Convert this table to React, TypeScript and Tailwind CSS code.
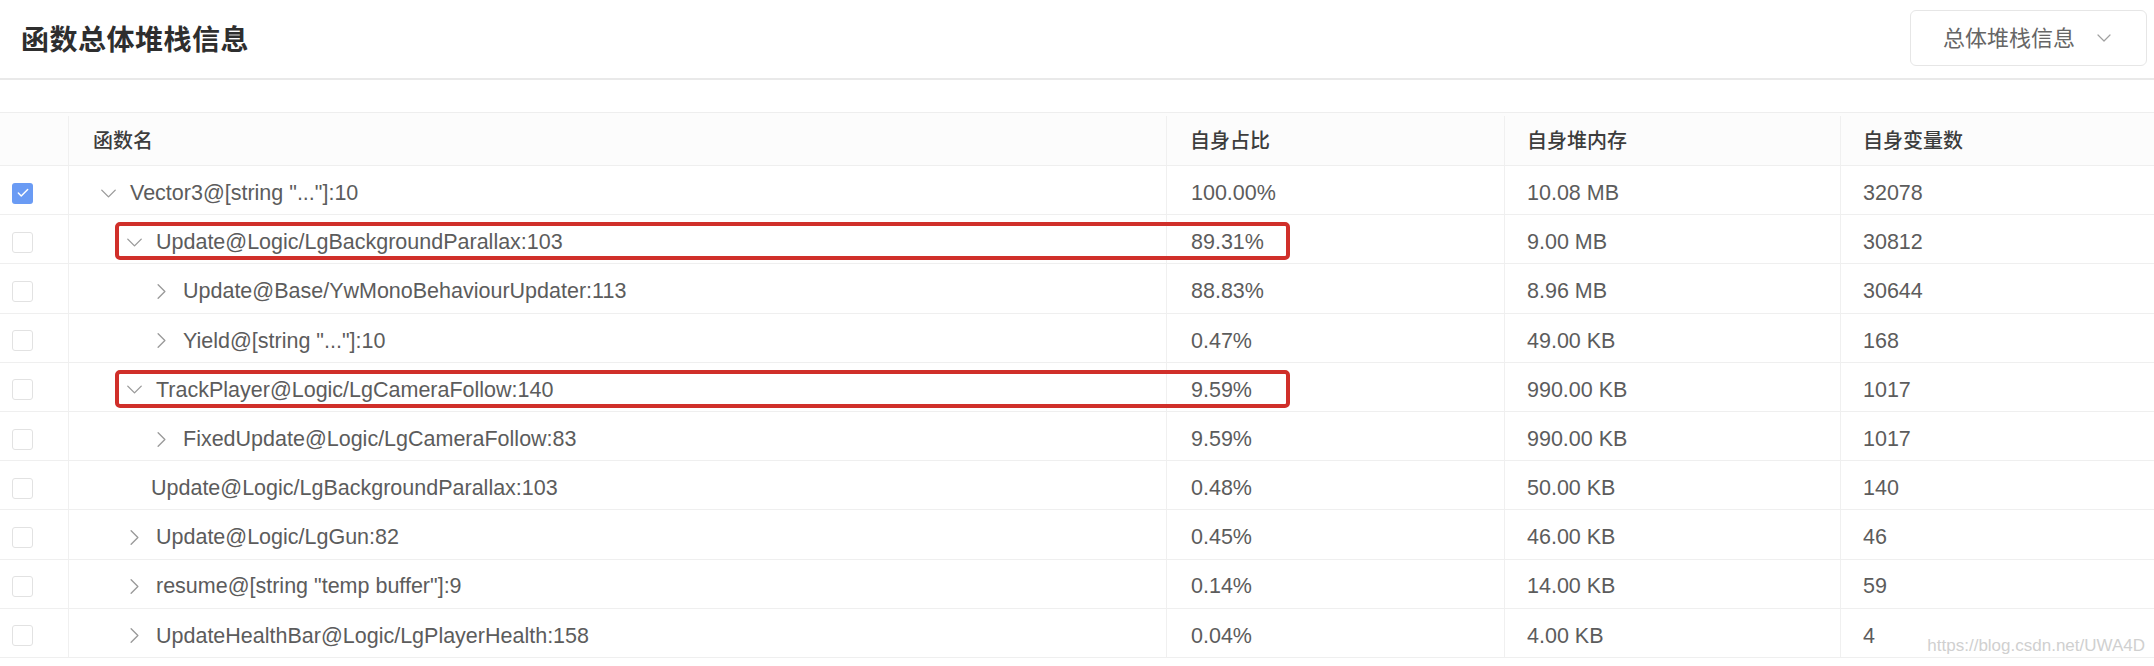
import { ChevronDown, ChevronRight, Check } from 'lucide-react';

type Row = {
  name: string;
  level: number;
  state: 'open' | 'closed' | 'leaf';
  ratio: string;
  heap: string;
  vars: string;
  checked?: boolean;
  marked?: boolean;
};

const rows: Row[] = [
  { name: 'Vector3@[string "..."]:10', level: 0, state: 'open', ratio: '100.00%', heap: '10.08 MB', vars: '32078', checked: true },
  { name: 'Update@Logic/LgBackgroundParallax:103', level: 1, state: 'open', ratio: '89.31%', heap: '9.00 MB', vars: '30812', marked: true },
  { name: 'Update@Base/YwMonoBehaviourUpdater:113', level: 2, state: 'closed', ratio: '88.83%', heap: '8.96 MB', vars: '30644' },
  { name: 'Yield@[string "..."]:10', level: 2, state: 'closed', ratio: '0.47%', heap: '49.00 KB', vars: '168' },
  { name: 'TrackPlayer@Logic/LgCameraFollow:140', level: 1, state: 'open', ratio: '9.59%', heap: '990.00 KB', vars: '1017', marked: true },
  { name: 'FixedUpdate@Logic/LgCameraFollow:83', level: 2, state: 'closed', ratio: '9.59%', heap: '990.00 KB', vars: '1017' },
  { name: 'Update@Logic/LgBackgroundParallax:103', level: 1, state: 'leaf', ratio: '0.48%', heap: '50.00 KB', vars: '140' },
  { name: 'Update@Logic/LgGun:82', level: 1, state: 'closed', ratio: '0.45%', heap: '46.00 KB', vars: '46' },
  { name: 'resume@[string "temp buffer"]:9', level: 1, state: 'closed', ratio: '0.14%', heap: '14.00 KB', vars: '59' },
  { name: 'UpdateHealthBar@Logic/LgPlayerHealth:158', level: 1, state: 'closed', ratio: '0.04%', heap: '4.00 KB', vars: '4' },
];

// tree indent per level
const indent = ['pl-[26px]', 'pl-[52px]', 'pl-[79px]'];
const cols = 'grid grid-cols-[69px_1098px_338px_336px_1fr]';

function Box({ checked }: { checked?: boolean }) {
  return checked ? (
    <span className="flex h-[21px] w-[21px] items-center justify-center rounded-[3px] bg-[#6a9bf4]">
      <Check className="h-[14px] w-[14px] text-white" strokeWidth={2.5} />
    </span>
  ) : (
    <span className="h-[21px] w-[21px] rounded-[3px] border border-[#e2e2e2] bg-white" />
  );
}

export default function App() {
  return (
    <div className="relative h-[666px] w-full overflow-hidden bg-white font-['Liberation_Sans','Noto_Sans_CJK_SC',sans-serif]">
      <div className="flex h-[80px] items-center justify-between border-b-2 border-[#e9e9e9] pl-[21px] pr-[7px] pb-[2px]">
        <h1 className="pt-[5px] text-[28px] font-bold tracking-[0.5px] text-[#2e2e2e]">函数总体堆栈信息</h1>
        <button className="flex h-[56px] w-[237px] items-center justify-between rounded-[6px] border border-[#e6e6e6] pl-[32px] pr-[30px] text-[22px] text-[#666]">
          <span>总体堆栈信息</span>
          <ChevronDown className="h-[24px] w-[24px] text-[#a0a0a0]" strokeWidth={1.2} />
        </button>
      </div>

      <div className="mt-[32px] border-t border-[#eeeeee] text-[21.5px] text-[#5c5c5c]">
        <div className={`${cols} h-[53px] border-b border-[#efefef] bg-[#fcfcfc] pt-[3px] text-[20px] font-medium text-[#3d3d3d]`}>
          <div className="border-r border-[#f0f0f0]" />
          <div className="flex items-center border-r border-[#f0f0f0] pl-[24px]">函数名</div>
          <div className="flex items-center border-r border-[#f0f0f0] pl-[23px]">自身占比</div>
          <div className="flex items-center border-r border-[#f0f0f0] pl-[22px]">自身堆内存</div>
          <div className="flex items-center pl-[22px]">自身变量数</div>
        </div>

        {rows.map((r, i) => (
          <div key={i} className={`${cols} relative h-[49.2px] border-b border-[#efefef]`}>
            <div className="flex items-center border-r border-[#f0f0f0] pl-[12px] pt-[6px]">
              <Box checked={r.checked} />
            </div>
            <div className={`flex items-center border-r border-[#f0f0f0] pt-[6px] ${indent[r.level]}`}>
              {r.state === 'leaf' ? (
                <span className="w-[30px]" />
              ) : (
                <span className="flex w-[35px] items-center">
                  {r.state === 'open' ? (
                    <ChevronDown className="h-[27px] w-[27px] text-[#9a9a9a]" strokeWidth={1.2} />
                  ) : (
                    <ChevronRight className="h-[27px] w-[27px] text-[#9a9a9a]" strokeWidth={1.2} />
                  )}
                </span>
              )}
              <span className="whitespace-nowrap">{r.name}</span>
            </div>
            <div className="flex items-center border-r border-[#f0f0f0] pl-[24px] pt-[6px]">{r.ratio}</div>
            <div className="flex items-center border-r border-[#f0f0f0] pl-[22px] pt-[6px]">{r.heap}</div>
            <div className="flex items-center pl-[22px] pt-[6px]">{r.vars}</div>
            {r.marked && (
              <div className="pointer-events-none absolute bottom-[3px] left-[115px] top-[7px] w-[1175px] rounded-[5px] border-4 border-[#d02f2a]" />
            )}
          </div>
        ))}
      </div>

      <span className="absolute bottom-[8px] right-[9px] text-[17px] text-[#d0d0d0]">https://blog.csdn.net/UWA4D</span>
    </div>
  );
}
